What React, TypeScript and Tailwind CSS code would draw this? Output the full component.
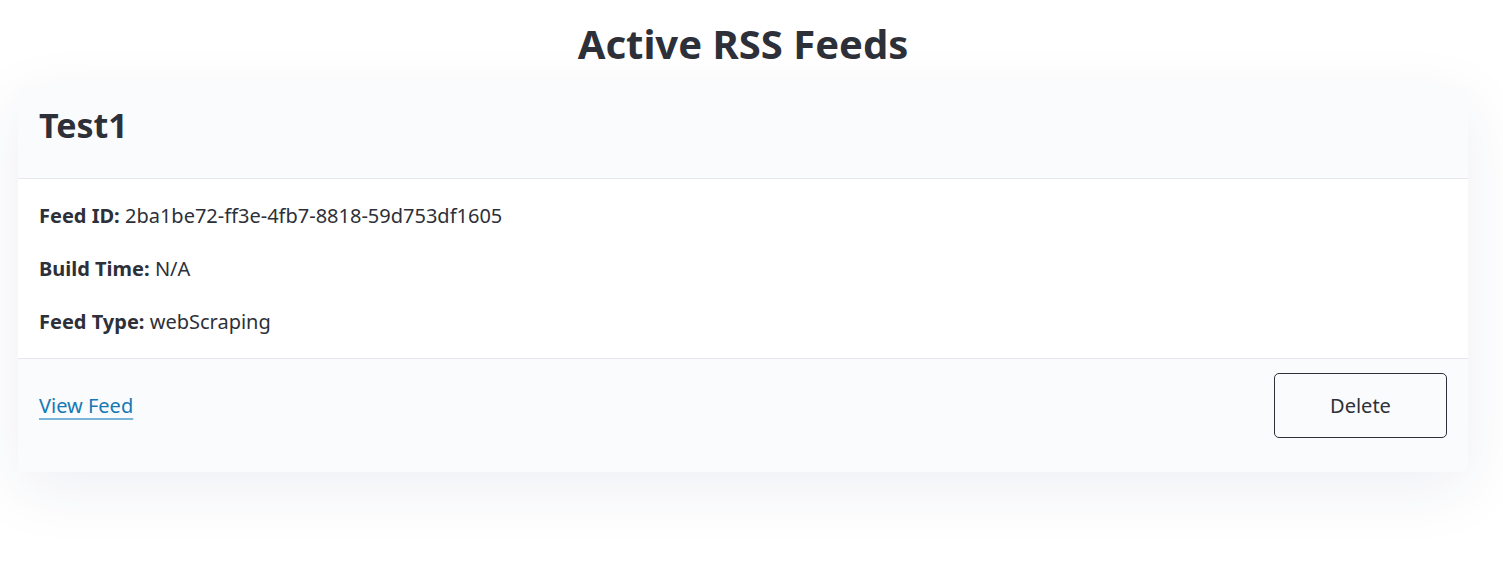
import React from 'react';

type Feed = {
  id: string;
  title: string;
  buildTime: string;
  type: string;
};

const feeds: Feed[] = [
  {
    id: '2ba1be72-ff3e-4fb7-8818-59d753df1605',
    title: 'Test1',
    buildTime: 'N/A',
    type: 'webScraping',
  },
];

function FeedCard({ feed }: { feed: Feed }) {
  return (
    <div className="bg-white rounded-md shadow-[0_16px_64px_rgba(40,50,110,0.08)] overflow-hidden">
      <div className="bg-[#fafbfc] border-b border-[#e6e8ee] h-[92px] px-[21px] pt-[21px]">
        <h2 className="text-[34px] font-bold text-[#2d3038] leading-none">{feed.title}</h2>
      </div>
      <div className="px-[21px] pt-[27px] pb-[26px] flex flex-col gap-[33px] text-[20px] text-[#2d3038] leading-[20px]">
        <p>
          <span className="font-bold">Feed ID:</span> {feed.id}
        </p>
        <p>
          <span className="font-bold">Build Time:</span> {feed.buildTime}
        </p>
        <p>
          <span className="font-bold">Feed Type:</span> {feed.type}
        </p>
      </div>
      <div className="bg-[#fafbfc] border-t border-[#e6e8ee] px-[21px] pt-[14px] pb-[34px] flex items-center justify-between">
        <a href="#" className="text-[20px] leading-[20px] text-[#1579b3] underline decoration-[#78b5d9] underline-offset-[5px]">
          View Feed
        </a>
        <button className="w-[173px] h-[65px] border border-[#2d3038] rounded-[5px] text-[20px] text-[#2d3038] bg-transparent">
          Delete
        </button>
      </div>
    </div>
  );
}

export default function App() {
  return (
    <div className="min-h-[584px] bg-white pl-[18px] pr-[35px] font-['Noto_Sans',sans-serif]">
      <h1 className="text-center text-[40px] font-bold text-[#2d3038] leading-none pt-[24px] pb-[23px]">
        Active RSS Feeds
      </h1>
      {feeds.map(feed => (
        <FeedCard key={feed.id} feed={feed} />
      ))}
    </div>
  );
}
